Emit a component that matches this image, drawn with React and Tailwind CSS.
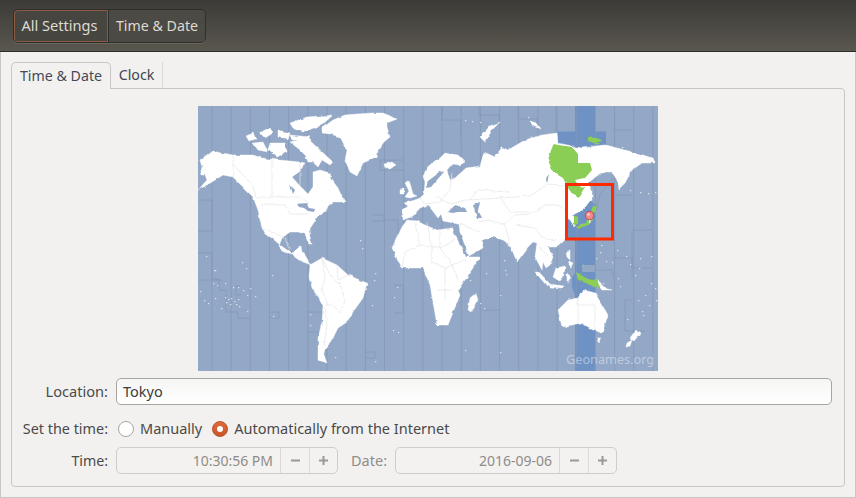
import React from "react";

const font = { fontFamily: '"Noto Sans", sans-serif' };

const zoneX = Array.from({ length: 24 }, (_, k) => 212 + 19.17 * k);

const zoneExtras = [
  "M198 200H212V231H198",
  "M380 160V170H403M380 160H403",
  "M198 253H212V279H219V290H226V312H238V318H250",
  "M198 280H222",
  "M307 312H322V332H307",
  "M269 312H279V318H269",
  "M241 286H236V295H241",
  "M365 352H375V358H365",
  "M384 220H398V250H403",
  "M394 285H403V313H394",
  "M372 215H384V221H372",
  "M442 106V120H461V138",
  "M479 106V115H499V122",
  "M518 106V119H537V125",
  "M556 106V132",
  "M613 130H632",
  "M613 178L600 195L595 212",
  "M632 195H613V240",
  "M652 230H632V268H652",
  "M613 258H632V278",
  "M632 300H625V331H645",
  "M594 270H613V278",
  "M483 310H499",
];

const land = [
  // Greenland
  "M322 128L333 120L345 115L357 114L372 113L383 113L397 119L387 123L387 127L390 137L384 142L378 150L377 158L370 160L363 163L357 176L350 172L345 160L347 150L340 137L330 134L322 133Z",
  // North America
  "M200 160L212 151L233 155L253 155L262 158L278 160L290 161L300 162L305 163L300 171L292 177L300 186L308 194L313 187L313 172L320 170L330 173L332 180L338 188L342 197L345 202L333 202L328 206L326 212L318 216L313 224L309 230L310 236L312 244L309 244L305 234L298 232L290 232L282 238L279 246L284 252L291 254L298 247L301 246L302 252L305 255L309 262L311 265L306 263L303 262L297 258L290 252L280 245L272 238L265 234L262 228L258 210L253 197L243 187L233 177L223 175L212 182L198 190L207 180L205 175L200 175L202 167Z",
  // Canadian arctic
  "M290 123L307 117L333 115L322 125L303 132L293 128Z",
  "M253 143L263 142L268 152L258 150Z",
  "M270 143L285 143L287 152L277 157L268 150Z",
  "M260 133L270 128L273 133L265 138Z",
  "M278 130L290 133L288 140L278 137Z",
  "M290 142L307 138L320 150L333 162L330 165L322 160L318 167L305 155L300 150Z",
  "M290 135L310 137L305 140L292 140Z",
  "M305 157L313 155L315 162L307 162Z",
  "M246 136L253 133L256 139L249 141Z",
  // South America
  "M310 265L322 258L337 265L348 275L367 283L363 298L353 312L347 322L338 328L333 338L323 352L327 363L318 360L318 338L322 322L323 305L312 288L309 277Z",
  // Iceland, UK, Ireland
  "M384 164L392 162L396 165L390 169L385 168Z",
  "M405 183L409 180L413 194L417 196L410 198L405 197L409 191Z",
  "M400 189L404 188L404 194L400 194Z",
  // Eurasia
  "M403 210L408 206L404 203L412 201L420 198L424 194L425 182L423 176L430 165L438 160L445 153L458 155L465 162L460 165L452 164L447 170L450 180L455 178L466 168L480 166L484 152L495 157L502 147L508 150L525 140L542 135L557 133L558 143L582 148L605 145L625 150L640 154L652 158L655 163L642 163L632 170L625 183L618 190L617 180L612 172L602 172L588 183L592 190L592 200L582 210L573 215L577 222L574 226L570 220L567 218L565 227L565 240L557 247L548 247L553 257L550 265L546 268L543 262L542 270L535 257L537 243L533 242L528 247L517 262L510 245L503 240L493 237L487 240L482 240L483 248L469 256L460 232L459 224L443 221L441 214L438 218L432 210L428 205L420 208L413 216L403 220Z",
  // Africa
  "M402 227L407 220L417 221L425 225L437 230L452 228L455 235L466 257L480 257L467 277L458 290L460 295L448 325L437 325L430 285L423 268L402 268L392 248Z",
  // Madagascar
  "M476 293L478 300L471 312L468 310L470 298Z",
  // Australia
  "M558 310L568 300L578 298L583 290L588 291L595 293L608 315L602 333L593 330L582 323L562 327Z",
  "M596 338L601 338L599 343Z",
  // New Zealand
  "M636 330L640 334L634 341L630 338Z",
  "M632 340L630 346L626 347L627 343Z",
  // Indonesia and others
  "M556 268L565 266L564 275L559 281L553 277Z",
  "M535 272L539 272L550 284L547 286Z",
  "M549 284L564 286L562 288L550 287Z",
  "M566 252L570 250L570 260L567 257Z",
  "M569 261L573 263L571 267L568 265Z",
  "M567 273L571 277L567 283Z",
  "M598 279L604 288L612 290L603 290L598 284Z",
  "M480 137L490 126L500 122L492 130L485 142Z",
  "M530 121L536 123L540 129L533 126Z",
];

const water = [
  "M448 212L455 205L465 208L467 212L458 212L452 213Z",
  "M473 205L480 203L478 210L482 218L477 218L475 212Z",
  "M428 181L436 175L440 171L444 172L436 181L431 187L426 188Z",
  "M546 178L549 174L547 183Z",
  "M290 185L295 190L293 194Z",
  "M297 204L306 203L309 208L315 209L314 212L308 211L304 208L299 207Z",
];

const green = [
  "M548 160L553 144L572 147L578 154L578 163L590 163L592 170L585 178L575 180L578 185L585 187L580 195L578 198L573 195L568 188L563 178L553 172Z",
  "M593 206L597 208L595 213L591 211Z",
  "M591 216L593 220L588 225L578 229L576 226L585 223Z",
  "M574 216L578 217L578 224L574 224Z",
  "M587 137L597 138L602 141L594 143L587 141Z",
  "M595 143L600 143L598 145Z",
  "M576 272L586 278L592 280L597 279L600 288L594 287L586 283L578 280Z",
  "M582 265L584 264L584 268Z",
  "M579 274L581 273L580 276Z",
];

const borders = [
  "M233 155V177",
  "M233 164L244 176L252 184L256 197L272 197",
  "M272 160V197M272 197H300L309 203",
  "M300 162V186",
  "M262 205H285L290 214L308 214",
  "M262 228L285 238",
  "M285 238L290 252",
  "M322 258L330 275L340 285L345 300L340 312L332 305L325 305",
  "M322 258L325 275L322 290L328 305",
  "M337 265L338 280L348 275",
  "M324 307L327 325L324 345",
  "M415 224L420 245L440 248L455 240",
  "M427 223L432 245L432 262",
  "M440 230L440 248L452 265L458 280",
  "M420 245L405 252L402 268",
  "M432 262L445 268L445 300",
  "M445 268L465 260",
  "M437 290H452",
  "M420 198L425 204L440 202L450 190L452 172",
  "M436 197L450 204L466 200L500 198L530 196L548 184L570 186",
  "M470 200L478 190L510 192",
  "M460 224L470 228L480 232",
  "M487 220L505 224L515 215L530 214L545 205L558 205L566 210",
  "M505 224L510 245",
  "M500 197L510 212L530 212",
  "M515 225L535 228L543 238L556 240",
  "M537 245L548 256",
  "M578 298V323M595 305V331",
  "M595 305H578",
  "M478 222L487 220",
];

const specks = [
  [242, 262], [246, 268], [214, 270], [213, 283], [217, 285], [225, 283], [233, 287], [238, 287], [243, 290], [247, 295], [255, 296], [272, 275],
  [206, 256], [215, 270], [250, 288], [200, 291], [204, 300], [208, 303], [215, 298], [221, 308], [247, 311], [273, 316],
  [225, 297], [228, 299], [231, 298], [234, 301], [226, 302], [230, 304], [236, 304], [239, 306], [238, 299],
  [310, 314], [310, 325], [375, 361], [335, 357], [397, 287], [372, 305], [375, 273], [394, 297], [393, 330], [398, 332], [374, 280],
  [617, 250], [626, 256], [630, 264], [640, 258], [651, 256], [606, 261], [612, 262], [603, 283], [638, 300], [651, 283], [656, 300], [649, 305],
  [642, 311], [627, 319], [643, 315], [655, 288], [620, 286], [618, 278], [639, 268], [635, 275], [645, 295], [486, 273], [480, 303], [484, 308],
  [504, 260], [505, 270], [506, 274], [500, 295], [470, 280], [500, 352], [465, 350], [601, 245], [600, 252], [596, 258], [360, 240], [362, 248],
  [465, 120], [472, 121], [480, 122], [528, 117], [622, 147], [640, 192], [648, 193], [655, 192], [630, 190],
];

function WorldMap() {
  return (
    <svg width="460" height="265" viewBox="198 106 460 265" className="block">
      <defs>
        <filter id="rough" x="-2%" y="-2%" width="104%" height="104%">
          <feTurbulence type="fractalNoise" baseFrequency="0.14" numOctaves="2" seed="4" result="n" />
          <feDisplacementMap in="SourceGraphic" in2="n" scale="3" xChannelSelector="R" yChannelSelector="G" />
          <feGaussianBlur stdDeviation="0.35" />
        </filter>
      </defs>
      <rect x="198" y="106" width="460" height="265" fill="#93a8c7" />
      <path
        d="M575 106H595V131.5H606V145H590V200L598 207L595 212V265H582V272H595V300V371H575V295L572 287V277L575 273V240L567 238V218L582 210L590 203L575 200V145H558V131.5H575Z"
        fill="#6f92c4"
      />
      {zoneX.map((x) => (
        <line key={x} x1={x} x2={x} y1="106" y2="371" stroke="#8497b5" strokeWidth="0.8" />
      ))}
      {zoneExtras.map((d) => (
        <path key={d} d={d} fill="none" stroke="#8497b5" strokeWidth="0.8" />
      ))}
      <g filter="url(#rough)">
        {land.map((d) => (
          <path key={d} d={d} fill="#ffffff" stroke="#ffffff" strokeWidth="0.4" />
        ))}
        {water.map((d) => (
          <path key={d} d={d} fill="#93a8c7" />
        ))}
        {borders.map((d) => (
          <path key={d} d={d} fill="none" stroke="#e3e4e6" strokeWidth="0.7" />
        ))}
        {green.map((d) => (
          <path key={d} d={d} fill="#8bce55" />
        ))}
      </g>
      {specks.map(([x, y]) => (
        <rect key={`${x}-${y}`} x={x} y={y} width="1.3" height="1.2" fill="#eef1f6" fillOpacity="0.8" />
      ))}
      <text x="566" y="364" fontSize="12.7" fill="#ffffff" fillOpacity="0.42" style={font}>
        Geonames.org
      </text>
      <rect x="566.5" y="184.5" width="46" height="54.5" fill="none" stroke="#ff2a00" strokeWidth="3" />
      <rect x="589" y="219" width="1.5" height="4" fill="#eeeeee" />
      <circle cx="589.5" cy="215.5" r="4.2" fill="#f08a8c" stroke="#c8494c" strokeWidth="1" />
      <circle cx="588.5" cy="214.5" r="1.2" fill="#fbd0d0" />
    </svg>
  );
}

function Spin({ value, width }) {
  return (
    <div className={`flex h-[27px] rounded-[5px] border border-[#cfcdc9] bg-[#f3f2f1] text-[14px] text-[#8f8c88] ${width}`}>
      <div className="flex flex-1 items-center justify-end pr-[7px]">{value}</div>
      <div className="flex w-[29px] items-center justify-center border-l border-[#dcdad7]">
        <svg width="11" height="11" viewBox="0 0 11 11">
          <path d="M1 5.5H10" stroke="#9b9995" strokeWidth="2" />
        </svg>
      </div>
      <div className="flex w-[28px] items-center justify-center border-l border-[#dcdad7]">
        <svg width="11" height="11" viewBox="0 0 11 11">
          <path d="M1 5.5H10M5.5 1V10" stroke="#9b9995" strokeWidth="2" />
        </svg>
      </div>
    </div>
  );
}

export default function App() {
  return (
    <div className="flex h-[498px] w-[856px] flex-col overflow-hidden bg-[#f2f1f0] text-[14.5px] text-[#3c3c3c]" style={font}>
      <header className="flex h-[52px] shrink-0 items-start border-b border-[#2f2e2a] bg-gradient-to-b from-[#3c3b37] to-[#5a574f] pl-[13px] pt-[9px] text-[#dfdbd2]">
        <div className="flex h-[34px] rounded-[5px] border border-[#2f2e2a] shadow-[0_1px_0_#6a675f]">
          <div className="flex w-[94px] items-center justify-center rounded-l-[4px] border border-[#8c5a43] bg-[#464540] pr-[3px] text-[14.6px]">All Settings</div>
          <div className="flex w-[97px] items-center justify-center rounded-r-[4px] border-l border-[#2f2e2a] bg-[#4c4a44] text-[14.2px]">Time &amp; Date</div>
        </div>
      </header>
      <div className="flex flex-1 flex-col border-x border-b border-[#c9c7c3] px-[10px] pb-[10px] pt-[10px]">
        <div className="flex h-[26px] shrink-0 text-[14.2px]">
          <div className="z-10 -mb-px flex w-[100px] items-center justify-center rounded-t-[5px] border border-b-0 border-[#c9c7c3] bg-[#f2f1f0] text-[#454a55]">Time &amp; Date</div>
          <div className="flex w-[52px] items-center justify-center border-r border-[#dcdad7] text-[#3f4650]">Clock</div>
        </div>
        <div className="flex flex-1 flex-col rounded-b-[4px] rounded-tr-[4px] border border-[#c9c7c3] pr-[12px] pt-[17px]">
          <div className="flex justify-center pl-[12px]">
            <WorldMap />
          </div>
          <div className="mt-[7px] grid grid-cols-[96px_1fr] items-center gap-x-[8px]">
            <div className="text-right text-[14.6px] text-[#4a4a48]">Location:</div>
            <div className="flex h-[27px] items-center rounded-[5px] border border-[#a8a6a2] bg-gradient-to-b from-[#f6f6f5] to-[#ffffff] pl-[6px] text-[#3c3c3c]">Tokyo</div>
          </div>
          <div className="mt-[11px] grid h-[25px] grid-cols-[96px_1fr] items-center gap-x-[8px]">
            <div className="text-right text-[14.4px] text-[#4a4a48]">Set the time:</div>
            <div className="flex items-center pl-[2px] text-[#4a4a48]">
              <span className="h-[16px] w-[16px] rounded-full border border-[#a8a6a2] bg-white" />
              <span className="ml-[6px]">Manually</span>
              <span className="ml-[10px] flex h-[16px] w-[16px] items-center justify-center rounded-full border border-[#b9522a] bg-gradient-to-b from-[#e0693a] to-[#c9552a]">
                <span className="h-[6px] w-[6px] rounded-full bg-white" />
              </span>
              <span className="ml-[6px]">Automatically from the Internet</span>
            </div>
          </div>
          <div className="mt-[6px] grid grid-cols-[96px_1fr] items-center gap-x-[8px]">
            <div className="text-right text-[14.2px] text-[#4a4a48]">Time:</div>
            <div className="flex items-center">
              <Spin value="10:30:56 PM" width="w-[222px]" />
              <span className="ml-[13px] w-[44px] text-[#8f8c88]">Date:</span>
              <Spin value="2016-09-06" width="w-[222px]" />
            </div>
          </div>
        </div>
      </div>
    </div>
  );
}
